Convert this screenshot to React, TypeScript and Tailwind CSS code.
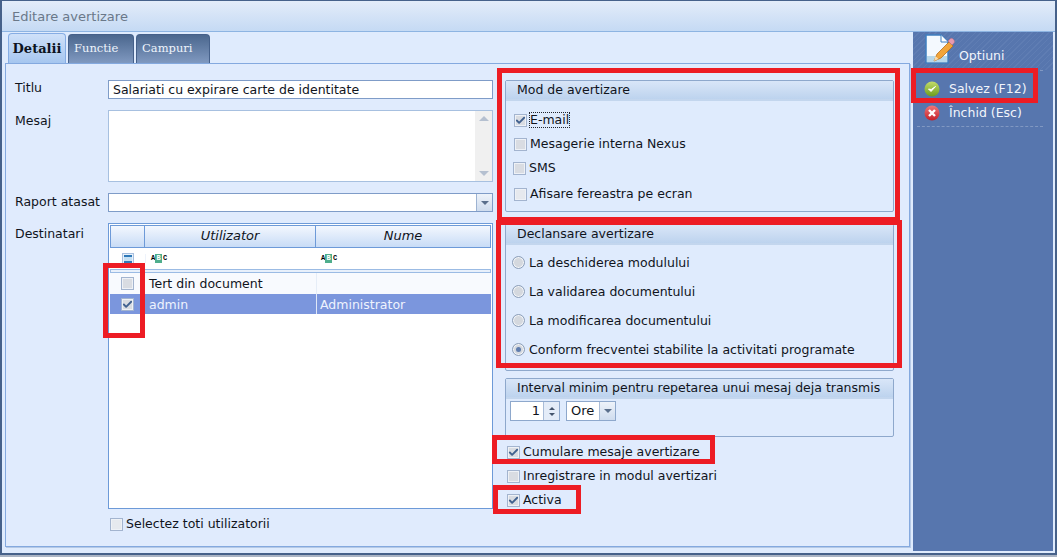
import { Check } from "lucide-react";

const FONT = "font-['DejaVu_Sans',Verdana,sans-serif]";

function CheckBox({ checked, disabled }: { checked?: boolean; disabled?: boolean }) {
  return (
    <span
      className={[
        "flex size-[13px] shrink-0 items-center justify-center border border-[#a3b4cf] shadow-[inset_0_0_0_1px_#eef1f6]",
        disabled ? "bg-[#e6e9ee]" : "bg-[#d9dce2]",
      ].join(" ")}
    >
      {checked && <Check className="size-[11px] text-[#41618f]" strokeWidth={4} />}
    </span>
  );
}

function Radio({ checked }: { checked?: boolean }) {
  return (
    <span className="flex size-[13px] shrink-0 items-center justify-center rounded-full border border-[#8c9fba] bg-[#d4d8de] shadow-[inset_0_0_0_1px_#f3f5f8]">
      {checked && <span className="size-[5px] rounded-full bg-[#5f7dae]" />}
    </span>
  );
}

function CheckRow({ label, checked, disabled, className }: { label: string; checked?: boolean; disabled?: boolean; className?: string }) {
  return (
    <div className={["flex items-center gap-[3px]", className].join(" ")}>
      <CheckBox checked={checked} disabled={disabled} />
      <span>{label}</span>
    </div>
  );
}

function Group({ title, className, children }: { title: string; className: string; children: React.ReactNode }) {
  return (
    <section className={["rounded-[2px] border border-[#8ea8cc] bg-[#dfebfd]", className].join(" ")}>
      <h3 className="h-[20px] border-b-2 border-[#c3d6ee] bg-gradient-to-b from-[#d9e6f8] to-[#bdd3ee] pl-[11px] leading-[18px] font-normal">
        {title}
      </h3>
      {children}
    </section>
  );
}

function AbcGlyph() {
  return (
    <span className="flex h-[9px] items-center gap-[1px] font-['Liberation_Mono',monospace] text-[7px] leading-none font-bold text-black">
      <span className="w-[3px]">A</span>
      <span className="flex h-[9px] w-[7px] items-center justify-center bg-[#4fae8c] text-white">B</span>
      <span className="w-[3px]">C</span>
    </span>
  );
}

function ArrowDown() {
  return <span className="size-0 border-x-[4px] border-t-[4px] border-x-transparent border-t-[#5a6f8c]" />;
}

function DocIcon() {
  return (
    <svg width="30" height="30" viewBox="0 0 30 30" className="shrink-0">
      <path d="M1 1h15l7 7v21H1z" fill="#f4f9fe" stroke="#3f7fc0" strokeWidth="1.5" />
      <path d="M2 22h20v6H2z" fill="#b8d8ea" />
      <path d="M16 1v7h7" fill="#fff" stroke="#3f7fc0" strokeWidth="1" />
      <path d="M9 27l3-7 12-12 4 4-12 12z" fill="#f2a53a" stroke="#b86e1c" strokeWidth="0.8" />
      <path d="M9 27l1.5-5 3 3z" fill="#f6dcb0" />
      <path d="M23 7l2-2c1-1 2-1 3 0l1 1c.6 1 .6 2 0 3l-2 2z" fill="#e79ab0" stroke="#b86a80" strokeWidth="0.5" />
    </svg>
  );
}

function OkIcon() {
  return (
    <svg width="16" height="16" viewBox="0 0 16 16" className="shrink-0">
      <defs>
        <linearGradient id="ok" x1="0" y1="0" x2="0" y2="1">
          <stop offset="0" stopColor="#c4dc6a" />
          <stop offset="1" stopColor="#6c9d1e" />
        </linearGradient>
      </defs>
      <circle cx="8" cy="8" r="7.5" fill="url(#ok)" />
      <path d="M4.5 8l2.5 2.5 4.5-5-4.3 3z" fill="#fff" stroke="#fff" strokeWidth="1" />
    </svg>
  );
}

function CloseIcon() {
  return (
    <svg width="16" height="16" viewBox="0 0 16 16" className="shrink-0">
      <defs>
        <linearGradient id="no" x1="0" y1="0" x2="0" y2="1">
          <stop offset="0" stopColor="#f0787a" />
          <stop offset="1" stopColor="#c41f28" />
        </linearGradient>
      </defs>
      <circle cx="8" cy="8" r="7.5" fill="url(#no)" />
      <path d="M5 5l6 6M11 5l-6 6" stroke="#fff" strokeWidth="2.4" />
    </svg>
  );
}

// red annotation frames drawn on top of the dialog
const MARKS = [
  "left-[497px] top-[68px] w-[403px] h-[154px]",
  "left-[496px] top-[220px] w-[406px] h-[148px]",
  "left-[103px] top-[263px] w-[42px] h-[75px]",
  "left-[911px] top-[68px] w-[127px] h-[35px]",
  "left-[492px] top-[435px] w-[223px] h-[29px]",
  "left-[493px] top-[485px] w-[88px] h-[29px]",
];

export default function App() {
  return (
    <div className={["relative flex h-[557px] w-[1057px] flex-col overflow-hidden bg-[#aab4c4] text-[12.5px] text-[#10141c]", FONT].join(" ")}>
      <div className="flex h-[555px] w-[1057px] flex-col border-t border-r-2 border-b-2 border-l-2 border-[#46618a] bg-[#dfebfd]">
        <header className="h-[31px] shrink-0 border-b border-[#8db4e2] bg-gradient-to-b from-[#e3ecf9] to-[#c5daf4] pt-[1px] pl-[10px] text-[13px] leading-[29px] text-[#6a7889]">
          Editare avertizare
        </header>

        <div className="flex min-h-0 flex-1 pb-[2px]">
          <div className="flex w-[911px] shrink-0 flex-col pr-[3px] pl-[3px]">
            <nav className="flex h-[31px] shrink-0 items-end gap-[2px] pl-[3px] font-['DejaVu_Serif',serif]">
              <span className="h-[30px] w-[58px] rounded-t-[4px] border border-b-0 border-[#86ade4] bg-gradient-to-b from-[#cfe1f9] to-[#a6c6ef] text-center text-[13px] leading-[29px] font-bold text-[#0d1420]">
                Detalii
              </span>
              <span className="h-[29px] w-[66px] rounded-t-[4px] border border-b-0 border-[#45608a] bg-gradient-to-b from-[#4b678e] to-[#8099c0] pl-[5px] text-[11.5px] leading-[26px] text-[#eef4fc]">
                Functie
              </span>
              <span className="h-[29px] w-[74px] rounded-t-[4px] border border-b-0 border-[#45608a] bg-gradient-to-b from-[#4b678e] to-[#8099c0] pl-[5px] text-[11.5px] leading-[26px] text-[#eef4fc]">
                Campuri
              </span>
            </nav>

            <main className="flex h-[484px] border border-[#84a9df] bg-[#e0ebfd] pt-[16px] shadow-[1px_1px_0_#b5c9e6]">
              <div className="flex w-[487px] shrink-0 pl-[9px]">
                <div className="flex w-[93px] shrink-0 flex-col">
                  <span className="h-[31px] leading-[15px]">Titlu</span>
                  <span className="h-[82px] leading-[20px]">Mesaj</span>
                  <span className="h-[31px] leading-[18px]">Raport atasat</span>
                  <span className="leading-[20px]">Destinatari</span>
                </div>

                <div className="flex w-[385px] shrink-0 flex-col">
                  <div className="h-[19px] border border-[#7f9cc8] bg-white pl-[4px] leading-[18px] text-[#10141c]">
                    Salariati cu expirare carte de identitate
                  </div>

                  <div className="mt-[11px] flex h-[72px] border border-[#a7c0e0] bg-white">
                    <div className="flex-1" />
                    <div className="flex w-[17px] flex-col items-center justify-between bg-[#f0f0f0] py-[5px]">
                      <span className="size-0 border-x-[5px] border-b-[5px] border-x-transparent border-b-[#b5c0d0]" />
                      <span className="size-0 border-x-[5px] border-t-[5px] border-x-transparent border-t-[#b5c0d0]" />
                    </div>
                  </div>

                  <div className="mt-[11px] flex h-[19px] border border-[#7f9cc8] bg-white">
                    <div className="flex-1" />
                    <div className="flex w-[16px] items-center justify-center border-l border-[#9db3d2] bg-gradient-to-b from-[#eef3fa] to-[#cfdcee]">
                      <ArrowDown />
                    </div>
                  </div>

                  <div className="mt-[11px] flex h-[286px] flex-col border border-[#6d9ad8] bg-white p-[1px]">
                    <div className="flex h-[23px] shrink-0 border border-[#6d9ad8] bg-gradient-to-b from-[#f3f7fe] to-[#c8dcf6] text-[13px] leading-[19px] italic">
                      <span className="w-[34px] border-r border-[#6d9ad8]" />
                      <span className="w-[171px] border-r border-[#6d9ad8] text-center">Utilizator</span>
                      <span className="flex-1 text-center">Nume</span>
                    </div>
                    <div className="flex h-[21px] shrink-0 items-center">
                      <span className="flex w-[35px] justify-center">
                        <span className="flex size-[12px] items-center justify-center border border-[#a9c0df] bg-[#e8f1fb]">
                          <span className="h-[8px] w-[8px] border-y-2 border-[#2f79b8] bg-[#c6e0f3]" />
                        </span>
                      </span>
                      <span className="w-[171px] border-l border-[#eef3fb] pl-[5px]">
                        <AbcGlyph />
                      </span>
                      <span className="flex-1 pl-[5px]">
                        <AbcGlyph />
                      </span>
                    </div>
                    <div className="h-[4px] shrink-0 border border-[#9bbbe4] bg-[#e8f0fb]" />
                    <div className="flex h-[21px] shrink-0 items-center bg-[#f8fafe]">
                      <span className="flex w-[35px] justify-center">
                        <CheckBox />
                      </span>
                      <span className="w-[171px] pt-[2px] pl-[4px]">Tert din document</span>
                      <span className="h-full flex-1 border-l border-[#e6edf7]" />
                    </div>
                    <div className="flex h-[20px] shrink-0 items-center bg-[#7b96dd] text-[#eef3fd]">
                      <span className="flex w-[35px] justify-center">
                        <CheckBox checked />
                      </span>
                      <span className="w-[171px] pt-[2px] pl-[4px]">admin</span>
                      <span className="flex-1 border-l border-[#dfe7f7] pt-[2px] pl-[3px]">Administrator</span>
                    </div>
                  </div>

                  <CheckRow label="Selectez toti utilizatorii" disabled className="mt-[6px] ml-[2px]" />
                </div>
              </div>

              <div className="ml-[12px] flex w-[389px] shrink-0 flex-col">
                <Group title="Mod de avertizare" className="h-[132px]">
                  <div className="flex flex-col gap-[10px] pt-[12px] pl-[8px] leading-[14px]">
                    <div className="flex items-center gap-[3px]">
                      <CheckBox checked />
                      <span className="outline-1 outline-dotted outline-[#20242c]">E-mail</span>
                    </div>
                    <CheckRow label="Mesagerie interna Nexus" />
                    <CheckRow label="SMS" className="-ml-[1px]" />
                    <CheckRow label="Afisare fereastra pe ecran" disabled className="mt-[2px]" />
                  </div>
                </Group>

                <Group title="Declansare avertizare" className="mt-[12px] h-[147px]">
                  <div className="flex flex-col gap-[14px] pt-[10px] pl-[6px] leading-[15px]">
                    {["La deschiderea modulului", "La validarea documentului", "La modificarea documentului"].map((label) => (
                      <div key={label} className="flex items-center gap-[4px]">
                        <Radio />
                        <span>{label}</span>
                      </div>
                    ))}
                    <div className="flex items-center gap-[4px]">
                      <Radio checked />
                      <span>Conform frecventei stabilite la activitati programate</span>
                    </div>
                  </div>
                </Group>

                <Group title="Interval minim pentru repetarea unui mesaj deja transmis" className="mt-[7px] h-[59px]">
                  <div className="flex gap-[6px] pt-[2px] pl-[4px] text-[13px]">
                    <div className="flex h-[20px] w-[50px] border border-[#8ea8cc] bg-white">
                      <span className="flex-1 pr-[3px] text-right leading-[18px]">1</span>
                      <span className="flex w-[16px] flex-col items-center justify-center gap-[3px] border-l border-[#a9bcd8] bg-[#e4ecf8]">
                        <span className="size-0 border-x-[3px] border-b-[3px] border-x-transparent border-b-[#44546c]" />
                        <span className="size-0 border-x-[3px] border-t-[3px] border-x-transparent border-t-[#44546c]" />
                      </span>
                    </div>
                    <div className="flex h-[20px] w-[50px] border border-[#8ea8cc] bg-white">
                      <span className="flex-1 pl-[4px] leading-[18px]">Ore</span>
                      <span className="flex w-[16px] items-center justify-center border-l border-[#a9bcd8] bg-gradient-to-b from-[#eef3fa] to-[#cfdcee]">
                        <ArrowDown />
                      </span>
                    </div>
                  </div>
                </Group>

                <div className="mt-[8px] flex flex-col gap-[10px] pl-[2px] leading-[14px]">
                  <CheckRow label="Cumulare mesaje avertizare" checked />
                  <CheckRow label="Inregistrare in modul avertizari" />
                  <CheckRow label="Activa" checked />
                </div>
              </div>
            </main>
          </div>

          <aside className="flex w-[140px] shrink-0 flex-col bg-[#5776ae] text-[#f2f5fb]">
            <div className="flex h-[38px] items-end gap-[4px] bg-[repeating-linear-gradient(135deg,#5f7db3_0,#5f7db3_1px,#5776ae_1px,#5776ae_4px)] pb-[6px] pl-[12px]">
              <DocIcon />
              <span className="leading-[16px]">Optiuni</span>
            </div>
            <div className="ml-[4px] w-[126px] border-b border-dashed border-[#8198c2]" />
            <div className="mt-[9px] flex items-center gap-[9px] pl-[11px] leading-[18px]">
              <OkIcon />
              <span>Salvez (F12)</span>
            </div>
            <div className="mt-[6px] flex items-center gap-[9px] pl-[11px] leading-[18px]">
              <CloseIcon />
              <span>Închid (Esc)</span>
            </div>
            <div className="mt-[4px] ml-[4px] w-[126px] border-b border-dashed border-[#8198c2]" />
          </aside>
        </div>
      </div>

      {MARKS.map((mark) => (
        <div key={mark} className={["pointer-events-none absolute border-[5px] border-[#ed1c24]", mark].join(" ")} />
      ))}
    </div>
  );
}
